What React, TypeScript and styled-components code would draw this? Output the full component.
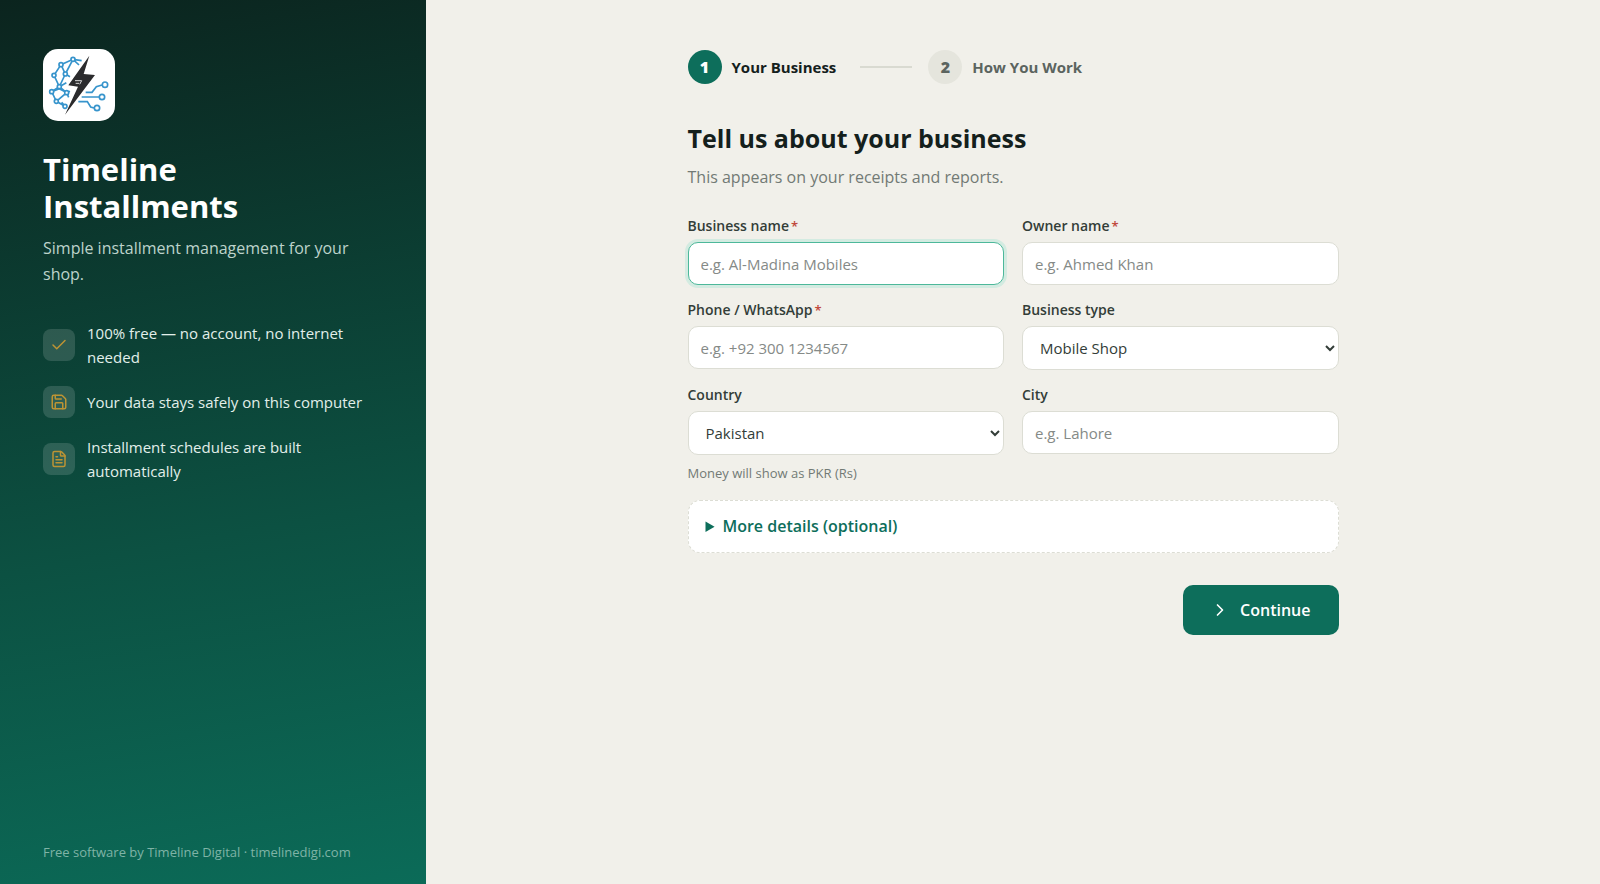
import React from "react";
import styled, { createGlobalStyle } from "styled-components";
import { Check, ChevronRight, FileText, Save } from "lucide-react";

const GlobalStyle = createGlobalStyle`
  *, *::before, *::after { box-sizing: border-box; }
  body {
    margin: 0;
    background: #f1f0ea;
    color: #14201c;
    font-family: "Segoe UI", "Open Sans", "Noto Sans", sans-serif;
    font-size: 16px;
  }
  h1, h2, p, ul { margin: 0; padding: 0; }
`;

const Page = styled.div`
  display: flex;
  min-height: 100vh;
`;

const Sidebar = styled.aside`
  flex: 0 0 426px;
  display: flex;
  flex-direction: column;
  padding: 49px 43px 22px;
  background: linear-gradient(170deg, #0b241e 0%, #0c5142 60%, #0b6b58 100%);
  color: #fff;
`;

const Logo = styled.svg`
  width: 72px;
  height: 72px;
  border-radius: 15px;
  background: #fff;
`;

const Brand = styled.h1`
  margin-top: 30px;
  width: min-content;
  font-size: 31px;
  font-weight: 700;
  line-height: 37px;
`;

const Tagline = styled.p`
  margin-top: 10px;
  color: #bdd3cb;
  font-size: 16px;
  line-height: 26px;
`;

const Features = styled.ul`
  display: flex;
  flex-direction: column;
  gap: 17px;
  margin-top: 34px;
  list-style: none;
`;

const Feature = styled.li`
  display: flex;
  align-items: center;
  gap: 12px;
  color: #e2efea;
  font-size: 15px;
  line-height: 24px;
`;

const FeatureIcon = styled.span`
  flex: none;
  display: grid;
  place-items: center;
  width: 32px;
  height: 32px;
  border-radius: 8px;
  background: rgba(255, 255, 255, 0.14);
  color: #bd9434;
`;

const Credit = styled.p`
  margin-top: auto;
  color: #7fb3a6;
  font-size: 13px;
  line-height: 20px;
`;

const Main = styled.main`
  flex: 1;
  display: flex;
  justify-content: center;
  padding: 49px 40px;
`;

const Form = styled.form`
  width: 100%;
  max-width: 651px;
`;

const Steps = styled.div`
  display: flex;
  align-items: center;
`;

const Step = styled.div<{ $active?: boolean }>`
  display: flex;
  align-items: center;
  gap: 10px;
  color: ${(p) => (p.$active ? "#14201c" : "#5b645f")};
  font-size: 15px;
  font-weight: 700;
  line-height: 36px;
`;

const StepNumber = styled.span<{ $active?: boolean }>`
  width: 34px;
  height: 34px;
  border-radius: 50%;
  background: ${(p) => (p.$active ? "#0d6e5b" : "#e5e5dd")};
  color: ${(p) => (p.$active ? "#fff" : "#5b645f")};
  font-size: 16px;
  font-weight: 800;
  line-height: 34px;
  text-align: center;
`;

const StepLine = styled.span`
  width: 52px;
  height: 2px;
  margin: 0 16px 0 24px;
  background: #d9dad1;
`;

const Title = styled.h2`
  margin-top: 34px;
  font-size: 25px;
  font-weight: 700;
  line-height: 38px;
`;

const Subtitle = styled.p`
  margin-top: 8px;
  color: #727a75;
  font-size: 16px;
  line-height: 24px;
`;

const Fields = styled.div`
  display: grid;
  grid-template-columns: 1fr 1fr;
  gap: 15px 18px;
  margin-top: 27px;
`;

const Field = styled.div`
  display: flex;
  flex-direction: column;
`;

const Label = styled.label`
  margin-bottom: 6px;
  color: #333d38;
  font-size: 14px;
  font-weight: 600;
  line-height: 20px;
`;

const Required = styled.span`
  margin-left: 2px;
  color: #c0483b;
  font-size: 13px;
`;

const Input = styled.input`
  width: 100%;
  height: 43px;
  padding: 0 12px;
  border: 1px solid #dcddd4;
  border-radius: 10px;
  background: #fff;
  color: #14201c;
  font: inherit;
  font-size: 15px;
  outline: none;

  &::placeholder { color: #858a87; }
  &:focus {
    border-color: #4db89a;
    box-shadow: 0 0 0 3px #d3ebe1;
  }
`;

const Select = styled.select`
  width: 100%;
  height: 44px;
  padding: 0 13px;
  border: 1px solid #dcddd4;
  border-radius: 10px;
  background: #fff;
  color: #333d38;
  font: inherit;
  font-size: 15px;
`;

const Hint = styled.p`
  margin-top: 8px;
  color: #727a75;
  font-size: 13px;
  line-height: 20px;
`;

const More = styled.details`
  margin-top: 17px;
  padding: 14px 17px;
  border: 1px dashed #dcddd4;
  border-radius: 12px;
  background: #fff;
`;

const MoreSummary = styled.summary`
  color: #0d6e5b;
  font-weight: 600;
  line-height: 23px;
`;

const MoreBody = styled.div`
  padding-top: 14px;
`;

const Actions = styled.div`
  display: flex;
  justify-content: flex-end;
  margin-top: 32px;
`;

const PrimaryButton = styled.button`
  display: flex;
  align-items: center;
  gap: 10px;
  height: 50px;
  padding: 0 28px 0 27px;
  border: 0;
  border-radius: 10px;
  background: #0d6e5b;
  color: #fff;
  font: inherit;
  font-weight: 600;
`;

const nodes = [
  [90, 31], [54, 47], [33, 79], [67, 75], [49, 113], [26, 128],
  [71, 131], [40, 157], [66, 172], [186, 107], [177, 144], [162, 177],
];

function BrandLogo() {
  return (
    <Logo viewBox="0 0 216 216" role="img" aria-label="Timeline Digital">
      <g fill="none" stroke="#3794cc" strokeWidth="5">
        <path d="M116 35 90 31 54 47 33 79 49 113 26 128 40 157 66 172M90 31 67 75 54 47M90 31 108 48M67 75 81 83M67 75 49 113 71 131 40 157M49 113 70 101M26 128 49 119 71 131 81 127M71 131 77 145M66 172 56 160" />
        <path d="M128 130H147L160 113 177 108M116 144H168M106 158H133L143 174 153 177" />
        {nodes.map(([x, y]) => (
          <circle key={`${x}-${y}`} cx={x} cy={y} r={x > 150 ? 8 : 6} fill="#fff" />
        ))}
      </g>
      <path d="M139 20 76 109 105 113 66 197 156 78 122 75Z" fill="#2b2b2d" />
      <path d="M96 95H116L110 106M98 103H108" fill="none" stroke="#d8d8d8" strokeWidth="3" />
    </Logo>
  );
}

export default function App() {
  return (
    <>
      <GlobalStyle />
      <Page>
        <Sidebar>
          <BrandLogo />
          <Brand>Timeline Installments</Brand>
          <Tagline>Simple installment management for your shop.</Tagline>
          <Features>
            <Feature>
              <FeatureIcon><Check size={18} /></FeatureIcon>
              <span>100% free — no account, no internet needed</span>
            </Feature>
            <Feature>
              <FeatureIcon><Save size={18} /></FeatureIcon>
              <span>Your data stays safely on this computer</span>
            </Feature>
            <Feature>
              <FeatureIcon><FileText size={18} /></FeatureIcon>
              <span>Installment schedules are built automatically</span>
            </Feature>
          </Features>
          <Credit>Free software by Timeline Digital · timelinedigi.com</Credit>
        </Sidebar>
        <Main>
          <Form onSubmit={(e) => e.preventDefault()}>
            <Steps>
              <Step $active>
                <StepNumber $active>1</StepNumber>
                <span>Your Business</span>
              </Step>
              <StepLine />
              <Step>
                <StepNumber>2</StepNumber>
                <span>How You Work</span>
              </Step>
            </Steps>
            <Title>Tell us about your business</Title>
            <Subtitle>This appears on your receipts and reports.</Subtitle>
            <Fields>
              <Field>
                <Label htmlFor="business">Business name<Required>*</Required></Label>
                <Input id="business" placeholder="e.g. Al-Madina Mobiles" autoFocus />
              </Field>
              <Field>
                <Label htmlFor="owner">Owner name<Required>*</Required></Label>
                <Input id="owner" placeholder="e.g. Ahmed Khan" />
              </Field>
              <Field>
                <Label htmlFor="phone">Phone / WhatsApp<Required>*</Required></Label>
                <Input id="phone" type="tel" placeholder="e.g. +92 300 1234567" />
              </Field>
              <Field>
                <Label htmlFor="type">Business type</Label>
                <Select id="type"><option>Mobile Shop</option></Select>
              </Field>
              <Field>
                <Label htmlFor="country">Country</Label>
                <Select id="country"><option>Pakistan</option></Select>
                <Hint>Money will show as PKR (Rs)</Hint>
              </Field>
              <Field>
                <Label htmlFor="city">City</Label>
                <Input id="city" placeholder="e.g. Lahore" />
              </Field>
            </Fields>
            <More>
              <MoreSummary>More details (optional)</MoreSummary>
              <MoreBody>
                <Field>
                  <Label htmlFor="address">Address</Label>
                  <Input id="address" />
                </Field>
              </MoreBody>
            </More>
            <Actions>
              <PrimaryButton type="submit">
                <ChevronRight size={20} />
                Continue
              </PrimaryButton>
            </Actions>
          </Form>
        </Main>
      </Page>
    </>
  );
}
